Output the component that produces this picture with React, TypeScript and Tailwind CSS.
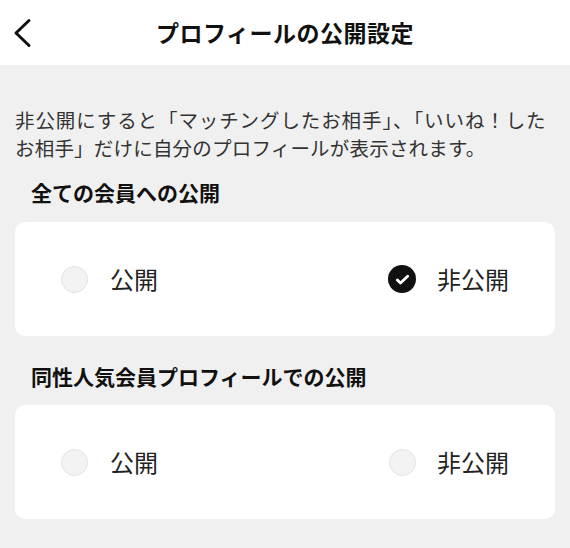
import { useState } from 'react'

type Choice = 'public' | 'private'

function Radio({ checked }: { checked: boolean }) {
  if (checked) {
    return (
      <span className="w-[28px] h-[28px] rounded-full bg-[#111] flex items-center justify-center">
        <svg viewBox="0 0 24 24" className="w-[19px] h-[19px]" fill="none" stroke="white" strokeWidth="3.6" strokeLinecap="round" strokeLinejoin="round">
          <path d="M5.5 12.5l4 4L18.5 8" />
        </svg>
      </span>
    )
  }
  return <span className="w-[27px] h-[27px] rounded-full bg-[#f3f3f3] border border-[#e2e2e2]" />
}

function OptionCard({ value, onChange }: { value: Choice; onChange: (v: Choice) => void }) {
  return (
    <div className="bg-white rounded-[10px] h-[114px] px-[46px] flex items-center justify-between">
      <button onClick={() => onChange('public')} className="flex items-center gap-[22px]">
        <Radio checked={value === 'public'} />
        <span className="text-[24px] text-[#222]">公開</span>
      </button>
      <button onClick={() => onChange('private')} className="flex items-center gap-[21px]">
        <Radio checked={value === 'private'} />
        <span className="text-[24px] text-[#222]">非公開</span>
      </button>
    </div>
  )
}

export default function App() {
  const [all, setAll] = useState<Choice>('private')
  const [popular, setPopular] = useState<Choice | 'none'>('none')

  return (
    <div className="w-[570px] h-[548px] bg-[#f0f0f0] font-['Noto_Sans_CJK_JP','Noto_Sans',sans-serif] overflow-hidden">
      {/* Header */}
      <div className="h-[65px] bg-white flex items-center relative">
        <button className="absolute left-[11px] top-[18px] w-[24px] h-[30px]" aria-label="戻る">
          <svg viewBox="0 0 24 30" className="w-full h-full" fill="none" stroke="#111" strokeWidth="3" strokeLinecap="round" strokeLinejoin="round">
            <path d="M18 2.5L5 15l13 12.5" />
          </svg>
        </button>
        <h1 className="w-full text-center text-[23px] font-bold text-[#111] tracking-[0.5px]">プロフィールの公開設定</h1>
      </div>

      <div className="px-[15px]">
        <div className="pt-[41px] text-[19.5px] leading-[28px] text-[#333]">
          <p className="whitespace-nowrap tracking-[0.9px]">非公開にすると「マッチングしたお相手」、「いいね！した</p>
          <p className="tracking-[0.2px]">お相手」だけに自分のプロフィールが表示されます。</p>
        </div>

        <h2 className="mt-[17px] pl-[16px] text-[21px] leading-[26px] font-bold text-[#111]">全ての会員への公開</h2>
        <div className="mt-[17px]">
          <OptionCard value={all} onChange={setAll} />
        </div>

        <h2 className="mt-[27px] pl-[16px] text-[21px] leading-[26px] font-bold text-[#111]">同性人気会員プロフィールでの公開</h2>
        <div className="mt-[16px]">
          <OptionCard value={popular as Choice} onChange={setPopular} />
        </div>
      </div>
    </div>
  )
}
